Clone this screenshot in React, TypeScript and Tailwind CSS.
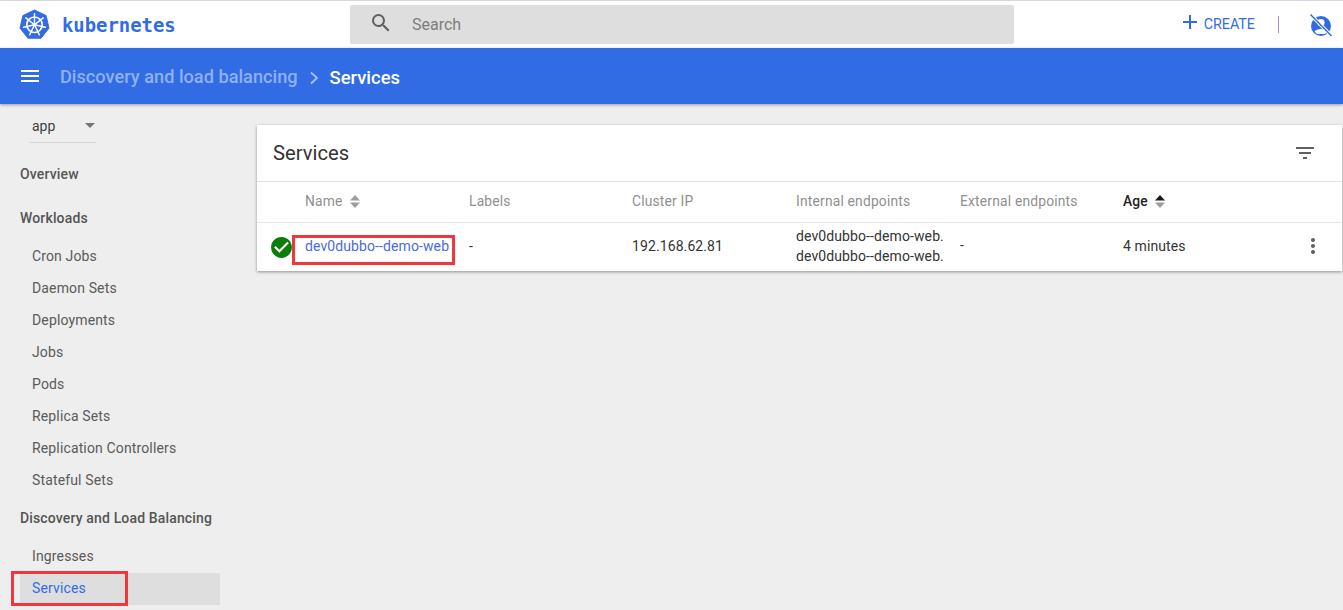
import React from "react";
import { MdSearch, MdAdd, MdMenu, MdFilterList, MdMoreVert, MdCheckCircle } from "react-icons/md";

function Logo() {
  const spokes = [0, 51.4, 102.8, 154.3, 205.7, 257.1, 308.6];
  return (
    <svg width="31" height="31" viewBox="0 0 32 32">
      <path d="M16 1 L28 6.8 L31 19.8 L22.7 30.2 L9.3 30.2 L1 19.8 L4 6.8 Z" fill="#326ce5" stroke="#326ce5" strokeWidth="1" strokeLinejoin="round" />
      <circle cx="16" cy="16.3" r="8" fill="none" stroke="#fff" strokeWidth="1.7" />
      <circle cx="16" cy="16.3" r="1.8" fill="#fff" />
      {spokes.map((a) => (
        <line key={a} x1="16" y1="16.3" x2="16" y2="4.8" stroke="#fff" strokeWidth="1.5" strokeLinecap="round" transform={`rotate(${a} 16 16.3)`} />
      ))}
    </svg>
  );
}

function UserOff() {
  return (
    <svg width="24" height="24" viewBox="0 0 24 24">
      <circle cx="12" cy="13" r="10" fill="#326ce5" />
      <circle cx="12" cy="9.5" r="3.6" fill="#fff" />
      <path d="M5.5 18.5 C7 15 17 15 18.5 18.5 L16 21 H8 Z" fill="#fff" />
      <line x1="1.5" y1="1.5" x2="22.5" y2="23" stroke="#fff" strokeWidth="3.4" />
      <line x1="1.5" y1="1.5" x2="22.5" y2="23" stroke="#326ce5" strokeWidth="1.5" />
    </svg>
  );
}

function Sort({ active }: { active?: boolean }) {
  return (
    <svg width="10" height="15" viewBox="0 0 10 15" className="ml-[7px]">
      <path d="M5 1 L10 6.5 H0 Z" fill={active ? "#1a1a1a" : "#9e9e9e"} />
      <path d="M5 14 L10 8.5 H0 Z" fill="#9e9e9e" />
    </svg>
  );
}

function NavItem({ label, active }: { label: string; active?: boolean }) {
  return (
    <div className={`h-8 ml-5 pl-3 pb-[2px] flex items-center text-[14px] tracking-[0.14px] ${active ? "bg-[#dedede] text-[#326ce5]" : "text-[#5a5a5a]"}`}>
      {label}
    </div>
  );
}

function NavHeader({ label, className }: { label: string; className: string }) {
  return <div className={`pl-5 h-5 pb-[2px] flex items-center text-[14px] font-medium tracking-[0.15px] text-[#555555] whitespace-nowrap ${className}`}>{label}</div>;
}

function Th({ label, sort, active }: { label: string; sort?: boolean; active?: boolean }) {
  return (
    <div className={`flex items-center pb-[2px] text-[13.8px] tracking-[0.2px] ${active ? "font-medium text-[#222]" : "text-[#8f8f8f]"}`}>
      {label}
      {sort && <Sort active={active} />}
    </div>
  );
}

const gridCols = "grid grid-cols-[48px_164px_163px_164px_164px_163px_1fr]";

export default function App() {
  return (
    <div className="h-[610px] w-[1343px] overflow-hidden bg-[#eeeeee] font-['Roboto',sans-serif] flex flex-col">
      <header className="h-12 shrink-0 bg-white border-t border-[#d8d8d8] flex items-center">
        <div className="w-[350px] shrink-0 flex items-center pl-[19px]">
          <Logo />
          <span className="ml-3 mt-[2px] font-['DejaVu_Sans_Mono',monospace] font-bold text-[18.9px] text-[#326ce5]">kubernetes</span>
        </div>
        <div className="w-[664px] h-[39px] -mt-[1px] bg-[#dedede] rounded-[2px] flex items-center pl-[19px] pt-[2px]">
          <MdSearch className="text-[#5f5f5f] -mt-[4px]" size={24} />
          <span className="ml-[19px] text-[16px] text-[#7d7d7d]">Search</span>
        </div>
        <div className="flex-1 flex items-center justify-end pr-[10px] text-[#326ce5] -mt-[2px]">
          <MdAdd size={24} className="-mt-[4px] mr-[2px]" />
          <span className="text-[14.3px] pt-[2px]">CREATE</span>
          <span className="ml-[23px] w-px h-[17px] mt-[2px] bg-[#a78be0]" />
          <span className="ml-[30px] mt-[3px]"><UserOff /></span>
        </div>
      </header>

      <div className="h-14 shrink-0 bg-[#326ce5] shadow-[0_1px_3px_rgba(0,0,0,0.35)] z-10 flex items-center pl-[18px] text-[18.2px] font-medium">
        <MdMenu size={24} className="text-white" />
        <span className="ml-[18px] pt-[1px] text-[#8fb0f2]">Discovery and load balancing</span>
        <svg width="10" height="14" viewBox="0 0 10 14" className="ml-[11px] mt-[3px]">
          <path d="M2 1.5 L8 7 L2 12.5" fill="none" stroke="#a9c3f5" strokeWidth="1.8" />
        </svg>
        <span className="ml-[11px] pt-[3px] text-[18.4px] text-white">Services</span>
      </div>

      <div className="flex-1 flex min-h-0">
        <aside className="w-[220px] shrink-0 relative">
          <div className="ml-[30px] mt-[11px] w-[66px] h-[28px] border-b border-[#d5d5d5] flex items-center justify-between pl-[2px] pr-[1px] text-[14px] text-[#3c3c3c]">
            <span className="-mt-[4px]">app</span>
            <svg width="10" height="5" viewBox="0 0 10 5" className="-mt-[7px]"><path d="M0 0 H10 L5 5 Z" fill="#757575" /></svg>
          </div>
          <NavHeader label="Overview" className="mt-[22px]" />
          <NavHeader label="Workloads" className="mt-6" />
          <div className="mt-[12px]">
            {["Cron Jobs", "Daemon Sets", "Deployments", "Jobs", "Pods", "Replica Sets", "Replication Controllers", "Stateful Sets"].map((l) => (
              <NavItem key={l} label={l} />
            ))}
          </div>
          <NavHeader label="Discovery and Load Balancing" className="mt-[12px]" />
          <div className="mt-[12px]">
            <NavItem label="Ingresses" />
            <div className="relative">
              <NavItem label="Services" active />
              <div className="absolute left-[11px] -top-[2px] w-[117px] h-[35px] border-[3px] border-[#f0383c]" />
            </div>
          </div>
        </aside>

        <main className="flex-1 pt-[21px] pl-[37px] pr-px">
          <section className="bg-white shadow-[0_1px_3px_rgba(0,0,0,0.4)]">
            <div className="h-[57px] border-b border-[#e2e2e2] flex items-center justify-between pl-4 pr-[25px]">
              <h1 className="text-[20.2px] text-[#333]">Services</h1>
              <MdFilterList size={24} className="text-[#616161]" />
            </div>
            <div className={`${gridCols} h-[41px] border-b border-[#e6e6e6]`}>
              <div />
              <Th label="Name" sort />
              <Th label="Labels" />
              <Th label="Cluster IP" />
              <Th label="Internal endpoints" />
              <Th label="External endpoints" />
              <Th label="Age" sort active />
            </div>
            <div className={`${gridCols} h-[48px] items-center pb-[2px] text-[14px] tracking-[0.1px] text-[#333]`}>
              <div className="pl-[12px] pt-[2px] flex items-center">
                <MdCheckCircle size={25} className="text-[#0a7d0a]" />
              </div>
              <div className="relative text-[#4a6be0]">
                dev0dubbo--demo-web
                <div className="absolute -left-[13px] -top-[1px] w-[163px] h-[30px] border-[3px] border-[#f0383c]" />
              </div>
              <div>-</div>
              <div>192.168.62.81</div>
              <div className="leading-[20px]">
                <div>dev0dubbo--demo-web.</div>
                <div>dev0dubbo--demo-web.</div>
              </div>
              <div className="-mt-[2px]">-</div>
              <div className="flex items-center justify-between pr-[17px]">
                <span>4 minutes</span>
                <MdMoreVert size={24} className="text-[#5f5f5f]" />
              </div>
            </div>
          </section>
        </main>
      </div>
    </div>
  );
}
